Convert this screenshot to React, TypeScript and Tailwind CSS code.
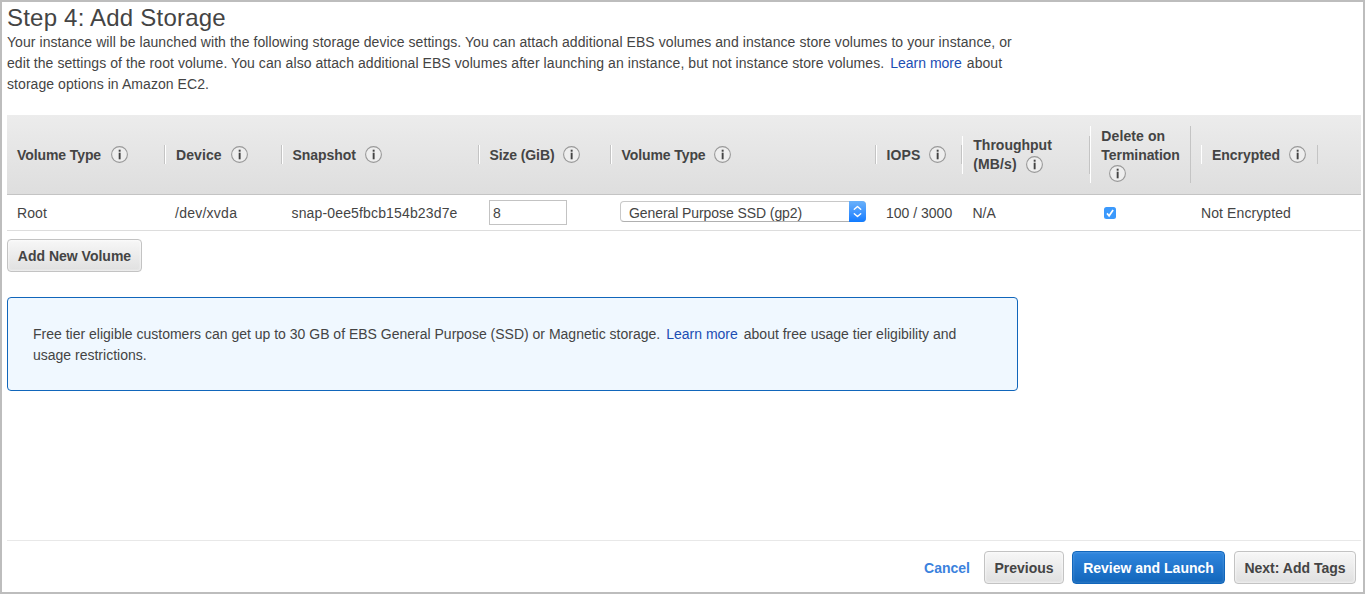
import type { ReactNode } from "react";

function InfoIcon({ className = "" }: { className?: string }) {
  return (
    <svg width="19" height="19" viewBox="0 0 19 19" className={"shrink-0 " + className}>
      <circle cx="9.5" cy="9.5" r="7.9" fill="#eeeeee" stroke="#999999" strokeWidth="1.1" />
      <rect x="8.7" y="4.7" width="1.9" height="2" fill="#444444" />
      <rect x="8.7" y="7.7" width="1.9" height="6.6" fill="#444444" />
    </svg>
  );
}

function HeaderCell({
  height = "h-[19px]",
  pad = "pl-[9.5px]",
  first = false,
  children,
}: {
  height?: string;
  pad?: string;
  first?: boolean;
  children: ReactNode;
}) {
  return (
    <div
      className={
        "flex flex-col border-r border-r-[#c4c4c4] " + height + " " + pad + (first ? "" : " border-l border-l-white")
      }
    >
      {children}
    </div>
  );
}

function HeaderLine({
  text,
  info = true,
  tracking = "",
  top = "pt-[2px]",
  gap = "ml-2",
}: {
  text: string;
  info?: boolean;
  tracking?: string;
  top?: string;
  gap?: string;
}) {
  return (
    <div className="flex h-[19px] items-center whitespace-nowrap">
      <span className={"leading-[19px] " + top + " " + tracking}>{text}</span>
      {info && <InfoIcon className={gap} />}
    </div>
  );
}

const columns =
  "grid grid-cols-[158px_117px_197px_132px_265px_86px_128px_101px_10px_117px_1fr] items-center";

const grayButton =
  "h-[33px] rounded-[4px] border border-[#c3c3c3] bg-linear-to-b from-[#f7f7f7] to-[#e0e0e0] pt-[2px] font-bold text-[#444444] shadow-[inset_0_0_2px_1px_rgba(255,255,255,0.5)]";

export default function App() {
  return (
    <div
      className="flex h-[594px] w-[1365px] flex-col overflow-hidden border-2 border-[#bdbdbd] bg-white pl-[5px] text-[14px] text-[#444444]"
      style={{ fontFamily: '"Liberation Sans", Arial, sans-serif' }}
    >
      <h1 className="mt-[1px] h-[29px] shrink-0 text-[24px] leading-[30px] tracking-[0.21px] whitespace-nowrap">
        Step 4: Add Storage
      </h1>
      <div className="h-[83px] shrink-0 leading-[21px] tracking-[0.067px] whitespace-nowrap">
        <p>
          Your instance will be launched with the following storage device settings. You can attach additional EBS
          volumes and instance store volumes to your instance, or
        </p>
        <p>
          edit the settings of the root volume. You can also attach additional EBS volumes after launching an
          instance, but not instance store volumes.
          <a className="mr-[5px] ml-[6px] tracking-normal text-[#1b4db3]">Learn more</a>
          about
        </p>
        <p>storage options in Amazon EC2.</p>
      </div>

      <div className="w-[1354px] shrink-0">
        <div
          className={
            columns + " h-[80px] border-b border-[#c4c4c4] bg-linear-to-b from-[#ececec] to-[#dedede] font-bold"
          }
        >
          <HeaderCell first pad="pl-[10px]">
            <HeaderLine text="Volume Type" tracking="tracking-[-0.09px]" gap="ml-[8.5px]" />
          </HeaderCell>
          <HeaderCell pad="pl-[10px]"><HeaderLine text="Device" tracking="tracking-[0.1px]" /></HeaderCell>
          <HeaderCell><HeaderLine text="Snapshot" tracking="tracking-[-0.05px]" /></HeaderCell>
          <HeaderCell><HeaderLine text="Size (GiB)" tracking="tracking-[-0.12px]" /></HeaderCell>
          <HeaderCell>
            <HeaderLine text="Volume Type" tracking="tracking-[-0.09px]" gap="ml-[7.5px]" />
          </HeaderCell>
          <HeaderCell><HeaderLine text="IOPS" tracking="tracking-[0.1px]" /></HeaderCell>
          <HeaderCell height="h-[38px]" pad="pl-[10.3px]">
            <HeaderLine text="Throughput" info={false} top="pt-0" />
            <HeaderLine text="(MB/s)" tracking="tracking-[0.1px]" top="pt-0" />
          </HeaderCell>
          <HeaderCell height="h-[57px]" pad="pl-[10.3px]">
            <HeaderLine text="Delete on" info={false} tracking="tracking-[0.1px]" />
            <HeaderLine text="Termination" info={false} tracking="tracking-[-0.05px]" />
            <HeaderLine text="" gap="ml-[7.2px]" />
          </HeaderCell>
          <div />
          <HeaderCell pad="pl-[10px]"><HeaderLine text="Encrypted" tracking="tracking-[-0.05px]" /></HeaderCell>
        </div>

        <div className={columns + " h-[36px] border-b border-[#dddddd] whitespace-nowrap"}>
          <div className="pt-[2px] pl-[10px] tracking-[0.1px]">Root</div>
          <div className="pt-[2px] pl-[10px] tracking-[0.25px]">/dev/xvda</div>
          <div className="pt-[2px] pl-[9.5px] tracking-[0.15px]">snap-0ee5fbcb154b23d7e</div>
          <div className="pl-[10px]">
            <input
              defaultValue="8"
              className="block h-[25px] w-[78px] border border-[#c3c3c3] bg-white px-[3px] outline-none"
            />
          </div>
          <div className="pb-[2px] pl-[9px]">
            <div className="flex h-[21px] w-[246px] rounded-[4px] border border-[#c8c8c8] border-b-[#b0b0b0]">
              <span className="flex-1 pl-2 leading-[23px] tracking-[-0.08px]">General Purpose SSD (gp2)</span>
              <span className="-my-px -mr-px flex w-[17px] items-center justify-center rounded-r-[4px] bg-linear-to-b from-[#69b1fa] to-[#0d7bff]">
                <svg
                  width="9"
                  height="13"
                  viewBox="0 0 9 13"
                  fill="none"
                  stroke="white"
                  strokeWidth="1.4"
                  strokeLinecap="round"
                  strokeLinejoin="round"
                >
                  <path d="M1.3 4.3 4.5 1.4 7.7 4.3M1.3 8.7 4.5 11.6 7.7 8.7" />
                </svg>
              </span>
            </div>
          </div>
          <div className="pt-[2px] pl-[10px]">100 / 3000</div>
          <div className="pt-[2px] pl-[10.5px]">N/A</div>
          <div className="pl-[14px]">
            <svg width="12" height="12" viewBox="0 0 12 12" className="block">
              <rect width="12" height="12" rx="2.5" fill="#3b99fc" />
              <path d="M3 6.4 5.1 8.8 9.1 3" fill="none" stroke="white" strokeWidth="1.7" />
            </svg>
          </div>
          <div />
          <div className="pt-[2px] tracking-[0.1px]">Not Encrypted</div>
        </div>
      </div>

      <button className={grayButton + " mt-[8px] w-[135px] shrink-0"}>Add New Volume</button>

      <div className="mt-[25px] h-[94px] w-[1011px] shrink-0 rounded-[4px] border border-[#1166bb] bg-[#f0f8ff] pt-[26px] pl-[25px] leading-[21px] whitespace-nowrap">
        <p>
          Free tier eligible customers can get up to 30 GB of EBS General Purpose (SSD) or Magnetic storage.
          <a className="mr-[6px] ml-[6px] text-[#1b4db3]">Learn more</a>
          about free usage tier eligibility and
        </p>
        <p>usage restrictions.</p>
      </div>

      <div className="mt-auto flex h-[52px] w-[1354px] shrink-0 items-start justify-end border-t border-[#e8e8e8] pt-[10px] pr-[5px]">
        <a className="mr-[14px] pt-px leading-[33px] font-bold text-[#3b82dd]">Cancel</a>
        <button className={grayButton + " w-[80px]"}>Previous</button>
        <button className="ml-2 h-[33px] w-[153px] rounded-[4px] border border-[#1166bb] bg-linear-to-b from-[#2f86de] to-[#1166bb] pt-[2px] font-bold text-white shadow-[inset_0_0_2px_1px_rgba(255,255,255,0.12)]">
          Review and Launch
        </button>
        <button className={grayButton + " ml-[9px] w-[122px]"}>Next: Add Tags</button>
      </div>
    </div>
  );
}
